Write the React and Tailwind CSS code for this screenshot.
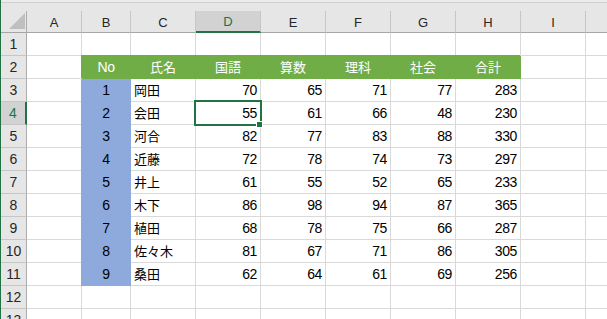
import React from "react";

const colLetters = ["A", "B", "C", "D", "E", "F", "G", "H", "I"];
const colW = [
  "w-[55px]",
  "w-[49px]",
  "w-[65px]",
  "w-[65px]",
  "w-[65px]",
  "w-[65px]",
  "w-[65px]",
  "w-[65px]",
  "w-[65px]",
];

const headers = ["No", "氏名", "国語", "算数", "理科", "社会", "合計"];
const data = [
  ["岡田", 70, 65, 71, 77, 283],
  ["会田", 55, 61, 66, 48, 230],
  ["河合", 82, 77, 83, 88, 330],
  ["近藤", 72, 78, 74, 73, 297],
  ["井上", 61, 55, 52, 65, 233],
  ["木下", 86, 98, 94, 87, 365],
  ["植田", 68, 78, 75, 66, 287],
  ["佐々木", 81, 67, 71, 86, 305],
  ["桑田", 62, 64, 61, 69, 256],
];

function ColHeader({ letter, w, selected }) {
  return (
    <div className={`${w} shrink-0 h-full flex flex-col`}>
      <div className="h-[8px]" />
      <div
        className={
          selected
            ? "flex-1 flex items-center justify-center border-r border-[#c6c6c6] border-b-2 border-b-[#217346] bg-[#d2d2d2] text-[#217346]"
            : "flex-1 flex items-center justify-center border-r border-[#c6c6c6] border-b border-b-[#a6a6a6] text-[#262626]"
        }
      >
        <span className="text-[13px] leading-none pt-[1px]">{letter}</span>
      </div>
    </div>
  );
}

function RowHeader({ n, selected }) {
  return (
    <div
      className={
        selected
          ? "w-[26px] shrink-0 h-full flex items-center justify-center bg-[#d2d2d2] border-b border-[#c6c6c6] border-r-2 border-r-[#217346] text-[#217346]"
          : "w-[26px] shrink-0 h-full flex items-center justify-center bg-[#e6e6e6] border-b border-[#c6c6c6] border-r border-r-[#ababab] text-[#262626]"
      }
    >
      <span className="text-[14px] leading-none">{n}</span>
    </div>
  );
}

function Cell({ w, children, kind, align }) {
  let cls = `${w} shrink-0 h-full flex items-center border-r border-b `;
  if (kind === "green") {
    cls +=
      "bg-[#70ad47] border-[#70ad47] shadow-[-1px_-1px_0_0_#70ad47] text-white justify-center";
  } else if (kind === "blue") {
    cls +=
      "bg-[#8ea9db] border-[#8ea9db] shadow-[-1px_0_0_0_#8ea9db] text-black justify-center";
  } else {
    cls += "border-[#d9d9d9] text-black ";
    if (align === "right") cls += "justify-end pr-[3px]";
    else if (align === "left") cls += "justify-start pl-[3px]";
  }
  return <div className={cls}>{children}</div>;
}

const num = (v) => (
  <span className="text-[14px] leading-none tracking-[-0.4px]">{v}</span>
);
const jp = (v) => <span className="text-[13px] leading-none">{v}</span>;

function Row({ r }) {
  const cells = [];
  for (let c = 0; c < 9; c++) {
    const w = colW[c];
    let content = null;
    let kind = null;
    let align = null;
    if (r === 2 && c >= 1 && c <= 7) {
      kind = "green";
      content = c === 1 ? num(headers[0]) : jp(headers[c - 1]);
    } else if (r >= 3 && r <= 11) {
      const d = data[r - 3];
      if (c === 1) {
        kind = "blue";
        content = num(r - 2);
      } else if (c === 2) {
        align = "left";
        content = jp(d[0]);
      } else if (c >= 3 && c <= 7) {
        align = "right";
        content = num(d[c - 2]);
      }
    }
    cells.push(
      <Cell key={c} w={w} kind={kind} align={align}>
        {content}
      </Cell>
    );
  }
  return (
    <div className="flex h-[23px] shrink-0">
      <RowHeader n={r} selected={r === 4} />
      {cells}
      <div className="flex-1 h-full border-b border-[#d9d9d9]" />
    </div>
  );
}

export default function App() {
  const rows = [];
  for (let r = 1; r <= 13; r++) rows.push(<Row key={r} r={r} />);
  return (
    <div className="relative w-[607px] h-[319px] overflow-hidden bg-white font-['Liberation_Sans','Noto_Sans_CJK_JP',sans-serif]">
      <div className="h-full flex flex-col border-l border-[#217346]">
        <div className="h-[3px] shrink-0 bg-[#ececec] border-b border-[#cfcfcf]" />
        <div className="flex h-[30px] shrink-0 bg-[#e6e6e6]">
          <div className="w-[26px] shrink-0 h-full flex flex-col">
            <div className="h-[8px]" />
            <div className="flex-1 border-r border-[#ababab] border-b border-b-[#a6a6a6] flex items-end justify-end pr-[1px] pb-[3px]">
              <svg width="16" height="16" viewBox="0 0 16 16">
                <polygon points="16,0 16,16 0,16" fill="#bfbfbf" />
              </svg>
            </div>
          </div>
          {colLetters.map((l, i) => (
            <ColHeader key={l} letter={l} w={colW[i]} selected={l === "D"} />
          ))}
          <div className="flex-1 h-full flex flex-col">
            <div className="h-[8px]" />
            <div className="flex-1 border-b border-b-[#a6a6a6]" />
          </div>
        </div>
        {rows}
      </div>
      <div className="absolute left-[194px] top-[100px] w-[68px] h-[26px] border-2 border-[#217346]" />
      <div className="absolute left-[256px] top-[121px] w-[7px] h-[7px] bg-[#217346] border border-white" />
    </div>
  );
}
